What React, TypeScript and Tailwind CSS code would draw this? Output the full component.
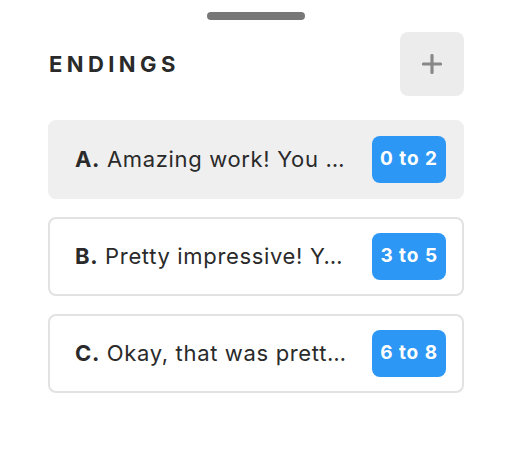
import React from "react";

const items = [
  { letter: "A.", text: "Amazing work! You …", range: "0 to 2", active: true },
  { letter: "B.", text: "Pretty impressive! Y…", range: "3 to 5", active: false },
  { letter: "C.", text: "Okay, that was prett…", range: "6 to 8", active: false },
];

export default function App() {
  return (
    <div className="w-[506px] h-[452px] bg-white pl-12 pr-[42px] pt-3 font-['Inter',sans-serif] text-[#2a2a2a]">
      <div className="flex justify-center">
        <div className="w-[98px] h-2 rounded-full bg-[#777777]" />
      </div>
      <div className="mt-3 flex items-center justify-between">
        <h2 className="pl-px text-[22px] font-bold tracking-[0.2em] leading-none">ENDINGS</h2>
        <button className="w-16 h-16 rounded-lg bg-[#ececec] flex items-center justify-center">
          <svg width="20" height="20" viewBox="0 0 20 20">
            <path d="M10 1.5v17M1.5 10h17" stroke="#888888" strokeWidth="3.2" strokeLinecap="round" />
          </svg>
        </button>
      </div>
      <div className="mt-6 flex flex-col gap-[18px]">
        {items.map((it) => (
          <div
            key={it.letter}
            className={
              it.active
                ? "h-[79px] rounded-lg border-2 border-[#efefef] bg-[#efefef] flex items-center justify-between pl-[25px] pr-4"
                : "h-[79px] rounded-lg border-2 border-[#e2e2e2] bg-white flex items-center justify-between pl-[25px] pr-4"
            }
          >
            <div className="text-[22px] tracking-[0.03em] whitespace-nowrap">
              <span className="font-bold">{it.letter}</span> {it.text}
            </div>
            <div className="h-[47px] px-2 rounded-lg bg-[#2c97f4] text-white font-bold text-[19px] tracking-[0.05em] flex items-center">
              {it.range}
            </div>
          </div>
        ))}
      </div>
    </div>
  );
}
